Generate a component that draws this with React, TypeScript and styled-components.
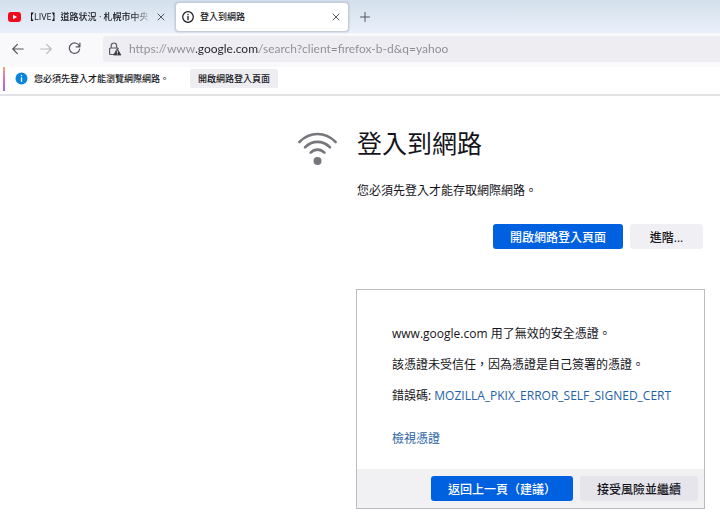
import React from "react";
import styled, { createGlobalStyle, css } from "styled-components";

const GlobalStyle = createGlobalStyle`
  *, *::before, *::after { box-sizing: border-box; }
  body {
    margin: 0;
    background: #fff;
    color: #15141a;
    font: 12px/16px "Open Sans", "Noto Sans CJK TC", sans-serif;
  }
  button, input { font-family: inherit; }
  h1, p { margin: 0; font-weight: 400; }
`;

const TabStrip = styled.header`
  display: flex;
  align-items: center;
  height: 33px;
  background: linear-gradient(180deg, #d3e0ec, #e9f0fa);
`;

const Tab = styled.div<{ $active?: boolean }>`
  display: flex;
  align-items: center;
  gap: 6px;
  height: 30px;
  padding: 0 6px;
  ${(p) =>
    p.$active
      ? css`
          width: 174px;
          border: 1px solid #c3ccd8;
          border-radius: 4px;
          background: #fff;
          box-shadow: 0 0 2px #a9b4c4;
        `
      : css`
          width: 175px;
          padding: 0 8px;
          gap: 4px;
        `}
`;

const TabTitle = styled.span<{ $fade?: boolean }>`
  flex: 1;
  min-width: 0;
  overflow: hidden;
  white-space: nowrap;
  font-size: 9px;
  font-weight: 500;
  ${(p) => p.$fade && css`
    mask-image: linear-gradient(90deg, #000 85%, transparent);
  `}
`;

const IconButton = styled.button<{ $size?: number }>`
  display: grid;
  place-items: center;
  flex: none;
  width: ${(p) => p.$size ?? 28}px;
  height: ${(p) => p.$size ?? 28}px;
  padding: 0;
  border: 0;
  background: none;
  color: #55545c;
  &:disabled { color: #bbbac0; }
`;

const NavBar = styled.nav`
  display: flex;
  align-items: center;
  height: 34px;
  padding: 0 0 3px 4px;
  background: #f9f9fb;
`;

const AddressBar = styled.label`
  display: flex;
  align-items: center;
  flex: 1;
  gap: 7px;
  height: 26px;
  margin-left: 15px;
  padding-left: 5px;
  border-radius: 4px 0 0 4px;
  background: #eeeef2;
  color: #5b5a62;
`;

const AddressInput = styled.input`
  flex: 1;
  min-width: 0;
  padding: 0;
  border: 0;
  outline: 0;
  font-family: Lato, sans-serif;
  font-size: 12px;
  line-height: 20px;
  color: transparent;
  background: linear-gradient(90deg, #8d8c93 67px, #25242b 67px 130px, #8d8c93 130px);
  background-clip: text;
`;

const Notification = styled.aside`
  display: flex;
  align-items: center;
  height: 29px;
  padding: 0 3px 4px;
  border-bottom: 2px solid #e3e3e4;
  font-size: 9px;
  font-weight: 500;
`;

const Accent = styled.span`
  width: 2px;
  height: 24px;
  margin-right: 10px;
  background: linear-gradient(180deg, #f5a27c, #d970b4, #9a68e0);
`;

const NotificationText = styled.span`
  margin: 0 21px 0 6px;
`;

const NotificationButton = styled.button`
  height: 19px;
  padding: 0 8px;
  border: 0;
  border-radius: 2px;
  background: #eeeef2;
  color: #15141a;
  font-size: 9px;
  font-weight: 500;
`;

const Page = styled.main`
  display: flex;
  align-items: flex-start;
  gap: 19px;
  padding: 32px 15px 16px 297px;
`;

const Content = styled.div`
  flex: 1;
  min-width: 0;
`;

const Title = styled.h1`
  font-size: 25px;
  line-height: 30px;
`;

const Lead = styled.p`
  margin-top: 25px;
`;

const Actions = styled.div`
  display: flex;
  justify-content: flex-end;
  gap: 7px;
  padding-right: 2px;
  margin: 25px 0 40px;
`;

const Button = styled.button<{ $primary?: boolean; $tinted?: boolean }>`
  min-width: 73px;
  height: 25px;
  padding: 0 17px;
  border: 0;
  border-radius: 3px;
  font-size: 12px;
  font-weight: 500;
  white-space: nowrap;
  color: ${(p) => (p.$primary ? "#fff" : "#15141a")};
  background: ${(p) => (p.$primary ? "#0061e0" : p.$tinted ? "#e5e5eb" : "#f0f0f4")};
`;

const Card = styled.section`
  border: 1px solid #bcbcc0;
  margin-left: -1px;
`;

const CardBody = styled.div`
  display: flex;
  flex-direction: column;
  align-items: flex-start;
  gap: 15px;
  padding: 36px 20px 22px 35px;
`;

const CardFooter = styled.footer`
  display: flex;
  justify-content: flex-end;
  gap: 7px;
  padding: 7px 6px;
  background: #f1f1f3;
`;

const Link = styled.a<{ $spaced?: boolean }>`
  color: #1f62a5;
  text-decoration: none;
  margin-top: ${(p) => (p.$spaced ? 12 : 0)}px;
`;

const Svg = styled.svg`
  display: block;
  flex: none;
  fill: none;
  stroke: currentColor;
  stroke-linecap: round;
  stroke-linejoin: round;
`;

const CloseIcon = () => (
  <Svg width="8" height="8" viewBox="0 0 8 8"><path d="M1 1l6 6M7 1L1 7" /></Svg>
);

const YouTubeIcon = () => (
  <Svg width="13" height="10" viewBox="0 0 13 10">
    <rect width="13" height="10" rx="3" fill="#f00a1c" stroke="none" />
    <path d="M5 2.8v4.4L9 5z" fill="#fff" stroke="none" />
  </Svg>
);

const InfoIcon = () => (
  <Svg width="12" height="12" viewBox="0 0 12 12">
    <circle cx="6" cy="6" r="5.3" strokeWidth="1.2" />
    <path d="M6 5.5v3.2M6 3.3v.2" strokeWidth="1.3" />
  </Svg>
);

const InfoBadge = () => (
  <Svg width="13" height="13" viewBox="0 0 13 13">
    <circle cx="6.5" cy="6.5" r="6" fill="#0a84dc" stroke="none" />
    <path d="M6.5 6v3.3M6.5 3.5v.2" stroke="#fff" strokeWidth="1.3" />
  </Svg>
);

const ArrowIcon = ({ forward }: { forward?: boolean }) => (
  <Svg width="12" height="12" viewBox="0 0 12 12" strokeWidth="1.2">
    <path d={forward ? "M.8 6h10.4M6.6 1.4L11.2 6l-4.6 4.6" : "M11.2 6H.8M5.4 1.4L.8 6l4.6 4.6"} />
  </Svg>
);

const ReloadIcon = () => (
  <Svg width="13" height="13" viewBox="0 0 13 13" strokeWidth="1.2">
    <path d="M11.2 3.8A5.2 5.2 0 1 0 11.7 7M11.9 1v3.8H8.1" />
  </Svg>
);

const LockWarningIcon = () => (
  <Svg width="14" height="14" viewBox="0 0 14 14" strokeWidth="1.2">
    <path d="M3.2 6V3.7a2.7 2.7 0 0 1 5.4 0V6M6 12.5H2.6a1 1 0 0 1-1-1V7a1 1 0 0 1 1-1h6.6a1 1 0 0 1 1 .6" />
    <path d="M9.4 7.1L12.9 13H5.9z" fill="#38373e" stroke="#38373e" strokeWidth=".8" />
    <path d="M9.4 9v1.8M9.4 12v.1" stroke="#eeeef2" strokeWidth=".9" />
  </Svg>
);

const PlusIcon = () => (
  <Svg width="10" height="10" viewBox="0 0 10 10"><path d="M5 .5v9M.5 5h9" /></Svg>
);

const WifiIcon = () => (
  <Svg width="41" height="36" viewBox="0 0 41 36">
    <g stroke="#77767c" strokeWidth="2.6">
      <path d="M2.4 12C13 1.4 28 1.4 38.6 12" />
      <path d="M8 17.4c7-7.4 18-7.4 25 0" />
      <path d="M13.6 22.6c4-4 9.8-4 13.8 0" />
    </g>
    <circle cx="20.5" cy="31" r="4" fill="#77767c" stroke="none" />
  </Svg>
);

const WifiSlot = styled.div`
  padding-top: 2px;
`;

export default function App() {
  return (
    <>
      <GlobalStyle />
      <TabStrip>
        <Tab>
          <YouTubeIcon />
          <TabTitle $fade>【LIVE】道路状況 · 札幌市中央</TabTitle>
          <IconButton $size={12} aria-label="關閉分頁"><CloseIcon /></IconButton>
        </Tab>
        <Tab $active>
          <InfoIcon />
          <TabTitle>登入到網路</TabTitle>
          <IconButton $size={12} aria-label="關閉分頁"><CloseIcon /></IconButton>
        </Tab>
        <IconButton $size={32} aria-label="開新分頁"><PlusIcon /></IconButton>
      </TabStrip>
      <NavBar>
        <IconButton aria-label="上一頁"><ArrowIcon /></IconButton>
        <IconButton aria-label="下一頁" disabled><ArrowIcon forward /></IconButton>
        <IconButton aria-label="重新載入"><ReloadIcon /></IconButton>
        <AddressBar>
          <LockWarningIcon />
          <AddressInput
            type="text"
            aria-label="網址"
            defaultValue="https://www.google.com/search?client=firefox-b-d&q=yahoo"
          />
        </AddressBar>
      </NavBar>
      <Notification>
        <Accent />
        <InfoBadge />
        <NotificationText>您必須先登入才能瀏覽網際網路。</NotificationText>
        <NotificationButton>開啟網路登入頁面</NotificationButton>
      </Notification>
      <Page>
        <WifiSlot><WifiIcon /></WifiSlot>
        <Content>
          <Title>登入到網路</Title>
          <Lead>您必須先登入才能存取網際網路。</Lead>
          <Actions>
            <Button $primary>開啟網路登入頁面</Button>
            <Button>進階...</Button>
          </Actions>
          <Card>
            <CardBody>
              <p>www.google.com 用了無效的安全憑證。</p>
              <p>該憑證未受信任，因為憑證是自己簽署的憑證。</p>
              <p>錯誤碼: <Link href="#error">MOZILLA_PKIX_ERROR_SELF_SIGNED_CERT</Link></p>
              <Link href="#certificate" $spaced>檢視憑證</Link>
            </CardBody>
            <CardFooter>
              <Button $primary>返回上一頁（建議）</Button>
              <Button $tinted>接受風險並繼續</Button>
            </CardFooter>
          </Card>
        </Content>
      </Page>
    </>
  );
}
